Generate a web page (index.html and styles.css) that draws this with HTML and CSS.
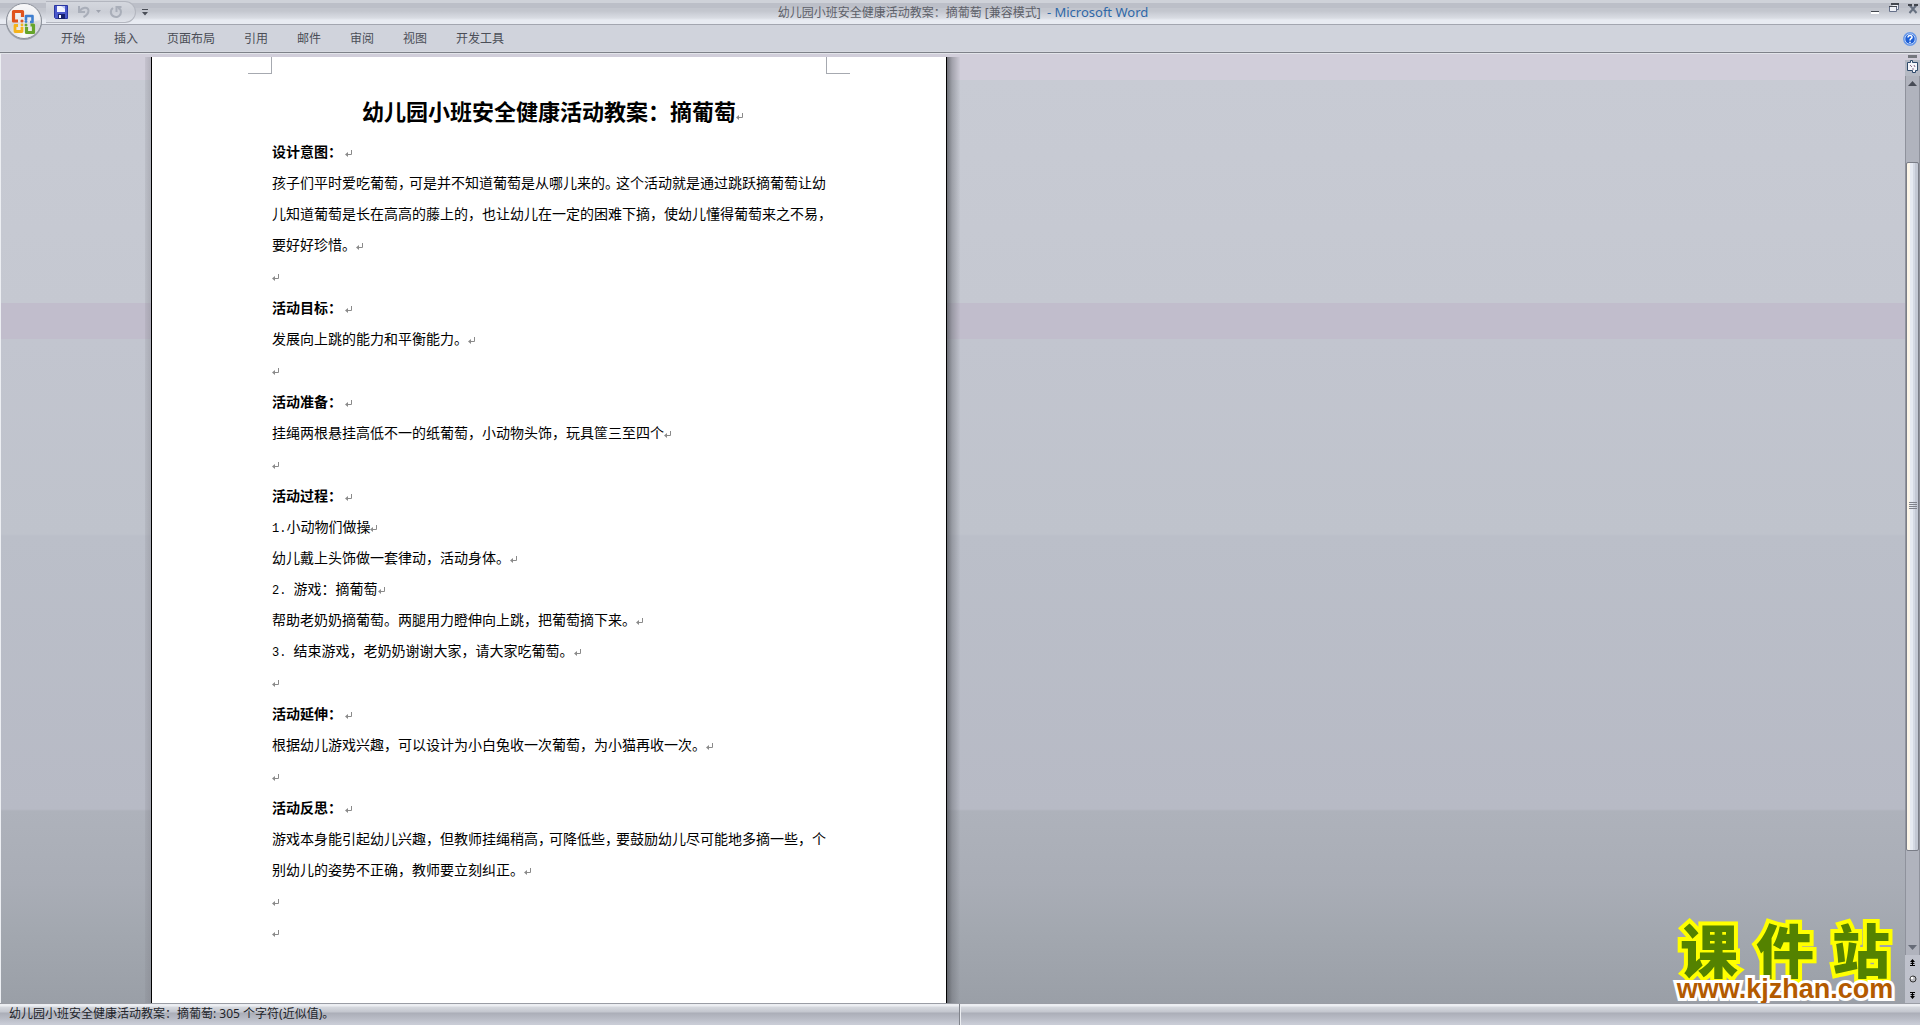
FILE: index.html
```html
<!DOCTYPE html>
<html lang="zh-CN">
<head>
<meta charset="utf-8">
<title>幼儿园小班安全健康活动教案：摘葡萄 [兼容模式] - Microsoft Word</title>
<link rel="stylesheet" href="styles.css">
</head>
<body>
<svg class="defs" aria-hidden="true">
  <symbol id="mark" viewBox="0 0 8 8"><path d="M3 2v5L0 4.500z" fill="#8a8a8a"/><path d="M6.500 0v4.500H2" fill="none" stroke="#8a8a8a"/></symbol>
</svg>

<header class="titlebar">
  <button class="office" aria-label="Office">
    <svg width="38" height="38" viewBox="0 0 38 38">
      <defs>
        <radialGradient id="orb" cx=".5" cy=".9" r=".9"><stop offset="0" stop-color="#fff"/><stop offset=".5" stop-color="#d4d6dc"/><stop offset="1" stop-color="#f2f2f4"/></radialGradient>
      </defs>
      <circle cx="19" cy="20" r="18" fill="#6e737d" opacity=".5"/>
      <circle cx="19" cy="19" r="17.500" fill="url(#orb)" stroke="#8b909a"/>
      <path d="M3 18a16 16 0 0 1 32 0q-16 5-32 0z" fill="#fff" opacity=".5"/>
      <g fill="none" stroke-width="3.200" stroke-linejoin="round">
        <path d="M13 19H8.500V9.500h9V15" stroke="#e0531d"/>
        <path d="M21 18v-4h6.500v6H25" stroke="#3f7fd0" stroke-width="2.600"/>
        <path d="M17 25v4.500H10v-6h3" stroke="#f4b31c" stroke-width="2.800"/>
        <path d="M21.500 25v5.500h7v-7.500h-3" stroke="#66a52c"/>
      </g>
      <g><circle cx="17" cy="19" r="1.600" fill="#e0531d"/><circle cx="21" cy="19.500" r="1.400" fill="#3f7fd0"/><circle cx="17" cy="23" r="1.400" fill="#f4b31c"/><circle cx="21" cy="23" r="1.500" fill="#66a52c"/></g>
    </svg>
  </button>
  <div class="quick">
    <button aria-label="保存"><svg width="14" height="14"><path d="M.5.500h13v13h-12l-1-1z" fill="#4a58cc" stroke="#2a36a0"/><path d="M3 1h8v6H3z" fill="#f2f4ff"/><path d="M7 1h4v3z" fill="#b9c4f2"/><path d="M4 9h7v5H4z" fill="#16206e"/><path d="M5 10h2v3H5z" fill="#fff"/></svg></button>
    <button class="undo" aria-label="撤消"><svg width="14" height="14"><path d="M2 1v6h6M2.500 6.500C5 2 11 1.500 11.500 5.500c0 3-2 5-5 6.500" fill="none" stroke="#a9aeb9" stroke-width="2"/></svg></button>
    <button class="more" aria-label="撤消列表"><svg width="6" height="4"><path d="M0 0h5L2.500 3z" fill="#9ea3ae"/></svg></button>
    <button aria-label="重复"><svg width="14" height="14"><path d="M4 3C1 5 1 10 5 11.500S12 10 12 7 11 3.500 9 3M7.500 7V2h5" fill="none" stroke="#a9aeb9" stroke-width="2"/></svg></button>
  </div>
  <button class="custom" aria-label="自定义快速访问工具栏"><svg width="6" height="7"><path d="M0 0h6v1H0zM0 3h6L3 6.500z" fill="#4a4e57"/></svg></button>
  <h1 class="caption">幼儿园小班安全健康活动教案：摘葡萄 [兼容模式] <span>- Microsoft Word</span></h1>
  <div class="winbtns">
    <button aria-label="最小化"><svg width="10" height="12"><path d="M1 9h8v1H1z" fill="#43474f"/><path d="M1 10h8v2H1z" fill="#fff"/></svg></button>
    <button aria-label="还原"><svg width="10" height="12"><path d="M2.500 2.500h7v5h-2M.5 4.500h7v5h-7z" fill="#eef0f6" stroke="#667089"/><path d="M2 1h8v2H2zM0 4h8v1H0z" fill="#43474f"/></svg></button>
    <button aria-label="关闭"><svg width="10" height="12"><path d="M1.500 3l7 8M8.500 3l-7 8" stroke="#667080" stroke-width="2"/><path d="M0 3h4M6 3h4" stroke="#43474f" stroke-width="2"/></svg></button>
  </div>
</header>

<nav class="ribbon">
  <div class="tabs">
    <button>开始</button><button>插入</button><button>页面布局</button><button>引用</button><button>邮件</button><button>审阅</button><button>视图</button><button>开发工具</button>
  </div>
  <button class="help" aria-label="帮助"><svg width="14" height="14"><circle cx="7" cy="7" r="6.300" fill="#1e5fd6" stroke="#6d9be8" stroke-width="1.200"/><circle cx="7" cy="7" r="5.200" fill="none" stroke="#e6f0ff" stroke-width=".8"/><path d="M5 5.500c0-3 4.500-2.500 4 0C8.800 6.500 7 6.500 7 8.500M7 9.700v1.300" fill="none" stroke="#fff" stroke-width="1.500"/></svg></button>
</nav>

<div class="work">
  <main class="canvas">
    <div class="shade-l"></div>
    <article class="page">
      <div class="corners"><i class="cl"></i><i class="cr"></i></div>
      <div class="text">
        <h2>幼儿园小班安全健康活动教案：摘葡萄<svg class="m"><use href="#mark"/></svg></h2>
        <section>
          <h3>设计意图：<svg class="m"><use href="#mark"/></svg></h3>
          <p>孩子们平时爱吃葡萄<span class="tight">，</span>可是并不知道葡萄是从哪儿来的<span class="tight">。</span>这个活动就是通过跳跃摘葡萄让幼<br>儿知道葡萄是长在高高的藤上的，也让幼儿在一定的困难下摘，使幼儿懂得葡萄来之不易，<br>要好好珍惜。<svg class="m"><use href="#mark"/></svg></p>
          <p><svg class="m"><use href="#mark"/></svg></p>
        </section>
        <section>
          <h3>活动目标：<svg class="m"><use href="#mark"/></svg></h3>
          <p>发展向上跳的能力和平衡能力。<svg class="m"><use href="#mark"/></svg></p>
          <p><svg class="m"><use href="#mark"/></svg></p>
        </section>
        <section>
          <h3>活动准备：<svg class="m"><use href="#mark"/></svg></h3>
          <p>挂绳两根悬挂高低不一的纸葡萄，小动物头饰，玩具筐三至四个<svg class="m"><use href="#mark"/></svg></p>
          <p><svg class="m"><use href="#mark"/></svg></p>
        </section>
        <section>
          <h3>活动过程：<svg class="m"><use href="#mark"/></svg></h3>
          <p><span class="num">1.</span>小动物们做操<svg class="m"><use href="#mark"/></svg></p>
          <p>幼儿戴上头饰做一套律动，活动身体。<svg class="m"><use href="#mark"/></svg></p>
          <p><span class="num">2. </span>游戏：摘葡萄<svg class="m"><use href="#mark"/></svg></p>
          <p>帮助老奶奶摘葡萄。两腿用力瞪伸向上跳，把葡萄摘下来。<svg class="m"><use href="#mark"/></svg></p>
          <p><span class="num">3. </span>结束游戏，老奶奶谢谢大家，请大家吃葡萄。<svg class="m"><use href="#mark"/></svg></p>
          <p><svg class="m"><use href="#mark"/></svg></p>
        </section>
        <section>
          <h3>活动延伸：<svg class="m"><use href="#mark"/></svg></h3>
          <p>根据幼儿游戏兴趣，可以设计为小白兔收一次葡萄，为小猫再收一次。<svg class="m"><use href="#mark"/></svg></p>
          <p><svg class="m"><use href="#mark"/></svg></p>
        </section>
        <section>
          <h3>活动反思：<svg class="m"><use href="#mark"/></svg></h3>
          <p>游戏本身能引起幼儿兴趣，但教师挂绳稍高<span class="tight">，</span>可降低些<span class="tight">，</span>要鼓励幼儿尽可能地多摘一些，个<br>别幼儿的姿势不正确，教师要立刻纠正。<svg class="m"><use href="#mark"/></svg></p>
          <p><svg class="m"><use href="#mark"/></svg></p>
          <p><svg class="m"><use href="#mark"/></svg></p>
        </section>
      </div>
    </article>
    <div class="shade-r"></div>
    <div class="logo">
      <div class="logo-name"><span>课</span><span>件</span><span>站</span></div>
      <div class="logo-url">www.kjzhan.com</div>
    </div>
  </main>
  <aside class="scroll">
    <button class="split" aria-label="拆分"></button>
    <button class="ruler" aria-label="标尺"><svg width="13" height="13"><path d="M1.500 2.500h3v-2h2v2h5v8h-2v2h-3v-2h-5z" fill="#f6f6fb" stroke="#2f4a6b"/><path d="M4 5l2 2M8 5l1 2M6 9h2" stroke="#8a6f8a"/></svg></button>
    <div class="track">
      <button class="arrow" aria-label="向上滚动"><svg width="9" height="5"><path d="M4.500 0L9 5H0z" fill="#474b55"/></svg></button>
      <div class="before"></div>
      <div class="thumb"><svg width="8" height="9"><path d="M0 .5h8M0 2.500h8M0 4.500h8M0 6.500h8" stroke="#7f828b"/></svg></div>
      <div class="after"></div>
      <button class="arrow" aria-label="向下滚动"><svg width="9" height="5"><path d="M0 0h9L4.500 5z" fill="#666b77"/></svg></button>
    </div>
    <div class="browse">
      <button aria-label="前一页"><svg width="7" height="7"><path d="M3.500 0L6 3H1zM3.500 3L6 5H1zM1 6h5v1H1zM3 2h1v5H3z"/></svg></button>
      <button aria-label="选择浏览对象"><svg width="8" height="8"><circle cx="4" cy="4" r="3" fill="#b9bac0" stroke="#333"/><circle cx="3" cy="3" r="1.300" fill="#fff"/></svg></button>
      <button aria-label="下一页"><svg width="7" height="7"><path d="M1 0h5v1H1zM1 2h5L3.500 4zM1 4h5L3.500 7zM3 0h1v6H3z"/></svg></button>
    </div>
  </aside>
</div>

<footer class="status">
  <div class="msg">幼儿园小班安全健康活动教案：摘葡萄: 305 个字符(近似值)。</div>
  <div class="rest"></div>
</footer>
</body>
</html>
```
FILE: styles.css
```css
* { box-sizing: border-box; margin: 0; padding: 0; }
body {
  height: 100vh;
  display: flex;
  flex-direction: column;
  overflow: hidden;
  font: 12px/16px "Noto Sans", "Noto Sans CJK SC", sans-serif;
  color: #4b4e57;
  background: #c7cad3;
}
button { border: 0; background: none; font: inherit; color: inherit; display: flex; align-items: center; justify-content: center; }
svg { display: block; }
.defs { position: absolute; width: 0; height: 0; }

/* title bar */
.titlebar {
  position: relative;
  height: 25px;
  flex: none;
  display: flex;
  align-items: center;
  padding: 0 2px 0 46px;
  border-bottom: 1px solid #a3a6b0;
  background: linear-gradient(#cfd2d9 0 3px, #bcbfc8 3px 8px, #c3c6ce 8px 11px, #cdd0d8 14px, #d9dce3 18px, #e8ebf2 20px);
}
.office { position: absolute; left: 5px; top: 2px; z-index: 2; }
.quick {
  display: flex;
  align-items: center;
  width: 90px;
  height: 22px;
  padding: 0 8px;
  border: 1px solid #b3b6bf;
  border-left: 0;
  border-radius: 0 12px 12px 0;
  background: linear-gradient(#d4d7de, #cbced6 50%, #e1e4eb);
}
.quick .undo { margin-left: 9px; }
.quick .more { margin: 0 7px 0 5px; width: 6px; flex: none; }
.custom { margin-left: 6px; }
.caption { flex: 1; text-align: center; font-size: 12px; font-weight: 400; line-height: 16px; padding: 0 92px 0 0; color: #5d6069; white-space: nowrap; }
.caption span { font-size: 13px; color: #2f68a8; margin-left: 3px; }
.winbtns { display: flex; gap: 9px; padding-bottom: 8px; }

/* ribbon */
.ribbon {
  flex: none;
  height: 28px;
  display: flex;
  align-items: center;
  justify-content: space-between;
  padding: 0 3px 0 61px;
  background: #d0d3dc;
  border-bottom: 1px solid #7e8189;
  box-shadow: inset 0 -1px #d6d9e0;
}
.tabs { display: flex; gap: 29px; }

/* document area */
.work { flex: 1; min-height: 0; display: flex; }
.canvas {
  position: relative;
  flex: 1;
  min-width: 0;
  display: flex;
  align-items: stretch;
  overflow: hidden;
  padding: 3px 0 0 144px;
  border-top: 1px solid #e2e4e9;
  border-left: 1px solid #eceef2;
  background: linear-gradient(#d1ceda 0 26px, #c8cbd4 26px, #c5c8d1 249px, #c1bdcc 249px 285px, #c2c5cf 285px, #bfc3cc 480px, #bbbfc9 482px, #b7bac5 755px, #aeb2bb 757px, #a9adb6 830px, #a3a8b0 875px, #9a9fa7 100%);
}
.shade-l { width: 6px; flex: none; background: linear-gradient(90deg, #77777f22, #77777f55); }
.shade-r { width: 13px; flex: none; background: linear-gradient(90deg, #4d5056bb, #6b6e7577 5px, #9a9da511); }
.page { width: 796px; flex: none; background: #fff; border: solid #000; border-width: 0 1px; color: #000; overflow: hidden; }
.corners { display: flex; justify-content: space-between; padding: 0 96px; }
.corners i { width: 24px; height: 17px; border: 0 solid #a6a9b0; border-bottom-width: 1px; }
.corners .cl { border-right-width: 1px; }
.corners .cr { border-left-width: 1px; }
.text { padding: 14px 120px 0; font: 14px/31px "Noto Sans CJK SC", sans-serif; white-space: nowrap; text-spacing-trim: space-all; }
.text h2 { font-size: 22px; line-height: 44px; font-weight: 700; text-align: center; padding-left: 8px; margin-bottom: 4px; }
.text h3 { font-size: 14px; line-height: 31px; font-weight: 700; }
.text h3 .m { margin-left: 3px; }
.text section { margin-bottom: 1px; }
.m { display: inline-block; width: 8px; height: 8px; vertical-align: -1px; }
.tight { margin-right: -3px; }
.num { font-family: "Liberation Mono", monospace; font-size: 12px; line-height: 16px; white-space: pre; }

/* site mark over the lower right corner */
.logo { position: absolute; right: 6px; bottom: 0; width: 228px; }
.logo-name { display: flex; justify-content: space-around; font: 900 58px/54px "Noto Sans CJK SC", sans-serif; color: #548200; -webkit-text-stroke: 8px #ff0; paint-order: stroke fill; }
.logo-url { text-align: center; font: 700 27px/28px "Liberation Sans", Arial, sans-serif; color: #b35a00; -webkit-text-stroke: 6px #fff; paint-order: stroke fill; }

/* vertical scroll bar */
.scroll { width: 15px; flex: none; display: flex; flex-direction: column; align-items: stretch; background: #bfc2cc; border-top: 1px solid #e2e4e9; }
.split { height: 6px; border: solid #d1ceda; border-width: 1px 3px 2px; background: #74777e; }
.ruler { height: 16px; background: #b5b9c3; align-items: flex-start; }
.track { flex: 1; display: flex; flex-direction: column; background: #b0b3bd; border: solid #8f929c; border-width: 0 1px; }
.arrow { height: 15px; }
.before { flex: 71; }
.thumb { flex: 690; display: flex; align-items: center; justify-content: center; border: 1px solid #7a7d87; border-radius: 2px; background: linear-gradient(90deg, #fdf6e8 0 3px, #e6eaf2 3px 6px, #d4d9e4 6px 8px, #c3c8d4 8px); }
.after { flex: 89; }
.browse { height: 48px; display: flex; flex-direction: column; justify-content: space-around; align-items: center; }

/* status bar */
.status {
  flex: none;
  height: 22px;
  display: flex;
  border-top: 1px solid #9a9da5;
  background: linear-gradient(#eceef2 0 2px, #d6d9df 3px, #c3c6ce 8px, #abaeb8 9px, #b7bac4 14px, #c9ccd6 20px);
  color: #22242a;
}
.msg { width: 50%; padding: 2px 9px 0; line-height: 16px; border-right: 1px solid #80838b; }
.rest { flex: 1; border-left: 1px solid #eceef2; }
```
